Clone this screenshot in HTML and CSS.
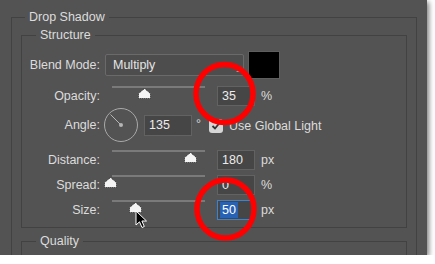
FILE: index.html
```html
<!DOCTYPE html>
<html>
<head>
<meta charset="utf-8">
<link rel="stylesheet" href="styles.css">
</head>
<body>
<div class="panel">
  <fieldset class="group outer">
    <legend>Drop Shadow</legend>
    <fieldset class="group inner">
      <legend>Structure</legend>
      <div class="row blend">
        <span class="label">Blend Mode:</span>
        <div class="select">Multiply<svg class="corner" width="4" height="4" viewBox="0 0 4 4"><path d="M4 0 L4 4 L0 4 Z" fill="#9a9a9a"/></svg></div>
        <div class="swatch"></div>
      </div>
      <div class="row slider-row opacity">
        <span class="label">Opacity:</span>
        <div class="slider"><div class="track"></div><svg class="thumb" style="left:26px" width="13" height="11" viewBox="0 0 13 11"><path d="M6.5 0.5 L12.5 5.5 L12.5 10.5 L0.5 10.5 L0.5 5.5 Z"/></svg></div>
        <div class="field">35</div><span class="unit">%</span>
      </div>
      <div class="row angle-row">
        <span class="label">Angle:</span>
        <svg class="dial" width="34" height="34" viewBox="0 0 34 34"><circle cx="17" cy="17" r="16.5" fill="none" stroke="#a9a9a9" stroke-width="1"/><line x1="17" y1="17" x2="6.5" y2="6.5" stroke="#b5b5b5" stroke-width="1"/><circle cx="17" cy="17" r="2" fill="#b5b5b5"/></svg>
        <div class="field angle">135</div><span class="deg">°</span>
        <span class="check"><svg width="14" height="14" viewBox="0 0 14 14"><path d="M3.5 7 L6 9.5 L10.5 4" fill="none" stroke="#333" stroke-width="1.8"/></svg></span>
        <span class="check-label">Use Global Light</span>
      </div>
      <div class="row slider-row distance">
        <span class="label">Distance:</span>
        <div class="slider"><div class="track"></div><svg class="thumb" style="left:72px" width="13" height="11" viewBox="0 0 13 11"><path d="M6.5 0.5 L12.5 5.5 L12.5 10.5 L0.5 10.5 L0.5 5.5 Z"/></svg></div>
        <div class="field">180</div><span class="unit">px</span>
      </div>
      <div class="row slider-row">
        <span class="label">Spread:</span>
        <div class="slider"><div class="track"></div><svg class="thumb" style="left:-8px" width="13" height="11" viewBox="0 0 13 11"><path d="M6.5 0.5 L12.5 5.5 L12.5 10.5 L0.5 10.5 L0.5 5.5 Z"/></svg></div>
        <div class="field">0</div><span class="unit">%</span>
      </div>
      <div class="row slider-row">
        <span class="label">Size:</span>
        <div class="slider"><div class="track"></div><svg class="thumb" style="left:17px" width="13" height="11" viewBox="0 0 13 11"><path d="M6.5 0.5 L12.5 5.5 L12.5 10.5 L0.5 10.5 L0.5 5.5 Z"/></svg></div>
        <div class="field focus"><span class="sel">50</span></div><span class="unit">px</span>
      </div>
    </fieldset>
    <fieldset class="group quality">
      <legend>Quality</legend>
    </fieldset>
  </fieldset>
  <svg class="annot" width="427" height="255" viewBox="0 0 427 255">
    <ellipse cx="224.5" cy="93.5" rx="28.5" ry="29" fill="none" stroke="#ff0000" stroke-width="5.5"/>
    <ellipse cx="225.5" cy="209" rx="28.5" ry="29" fill="none" stroke="#ff0000" stroke-width="5.5"/>
  </svg>
  <svg class="cursor" width="14" height="20" viewBox="0 0 14 20"><path d="M1 1 L1 15 L4.5 11.8 L7 17.5 L9.3 16.5 L6.9 11 L11.5 11 Z" fill="#000" stroke="#fff" stroke-width="1"/></svg>
</div>
</body>
</html>
```
FILE: styles.css
```css
body {
  margin: 0;
  background: #ffffff;
  font-family: "Liberation Sans", Arial, sans-serif;
  font-size: 12.5px;
  color: #dcdcdc;
}
.panel {
  position: relative;
  width: 427px;
  height: 255px;
  box-sizing: border-box;
  padding: 10px 10px 0 11px;
  background: #535353;
  overflow: hidden;
  box-shadow: 2px 2px 5px rgba(0, 0, 0, 0.5);
}
.group {
  margin: 0;
  border: 1px solid #424242;
  min-width: 0;
}
.group > legend {
  padding: 0 4px;
  line-height: 15px;
}
.outer {
  padding: 0 9px;
  height: 300px;
}
.outer > legend {
  margin-left: 4px;
}
.inner {
  margin-top: 3px;
  padding: 0 0 5px 0;
}
.inner > legend,
.quality > legend {
  margin-left: 14px;
}
.quality {
  margin-top: 6px;
  padding: 0;
  height: 40px;
}
.row {
  display: flex;
  align-items: center;
}
.label {
  flex: none;
  width: 78px;
  text-align: right;
}
.blend {
  margin-top: 8px;
  height: 28px;
}
.select {
  position: relative;
  flex: none;
  margin-left: 5px;
  width: 139px;
  height: 22px;
  box-sizing: border-box;
  border: 1px solid #6a6a6a;
  border-radius: 2px;
  background: #4d4d4d;
  padding-left: 7px;
  line-height: 20px;
  color: #e6e6e6;
}
.corner {
  position: absolute;
  right: 3px;
  bottom: 3px;
}
.swatch {
  flex: none;
  margin-left: 4px;
  width: 32px;
  height: 28px;
  box-sizing: border-box;
  background: #000;
  border: 1px solid #5e5e5e;
}
.slider-row {
  height: 25px;
}
.opacity {
  margin-top: 4px;
}
.distance {
  margin-top: 5px;
}
.slider {
  position: relative;
  flex: none;
  align-self: stretch;
  width: 93px;
  margin-left: 12px;
}
.track {
  margin-top: 3px;
  height: 2px;
  background: #7a7a7a;
}
.thumb {
  position: absolute;
  top: 5px;
}
.thumb path {
  fill: #f4f4f4;
  stroke: #222;
  stroke-width: 1;
  stroke-dasharray: 1 1;
}
.field {
  flex: none;
  margin-left: 12px;
  width: 38px;
  height: 20px;
  box-sizing: border-box;
  border: 1px solid #626262;
  background: #464646;
  padding-left: 4px;
  line-height: 18px;
  color: #ececec;
}
.field.focus {
  border-color: #3a82d6;
  padding-left: 2px;
  padding-top: 1px;
  line-height: 16px;
}
.sel {
  display: inline-block;
  padding: 0 2px;
  background: #2762b4;
  color: #ffffff;
}
.unit {
  margin-left: 6px;
}
.angle-row {
  height: 34px;
}
.dial {
  flex: none;
  margin-left: 4px;
}
.field.angle {
  margin-left: 6px;
  width: 48px;
  height: 21px;
  line-height: 19px;
}
.deg {
  align-self: flex-start;
  margin-top: 9px;
  margin-left: 4px;
}
.check {
  flex: none;
  margin-left: 8px;
  margin-top: 2px;
  width: 14px;
  height: 14px;
  background: #d6d6d6;
  border-radius: 3px;
  display: flex;
}
.check-label {
  margin-left: 6px;
  margin-top: 2px;
}
.annot {
  position: absolute;
  left: 0;
  top: 0;
  pointer-events: none;
}
.cursor {
  position: absolute;
  left: 135px;
  top: 210px;
}
```
